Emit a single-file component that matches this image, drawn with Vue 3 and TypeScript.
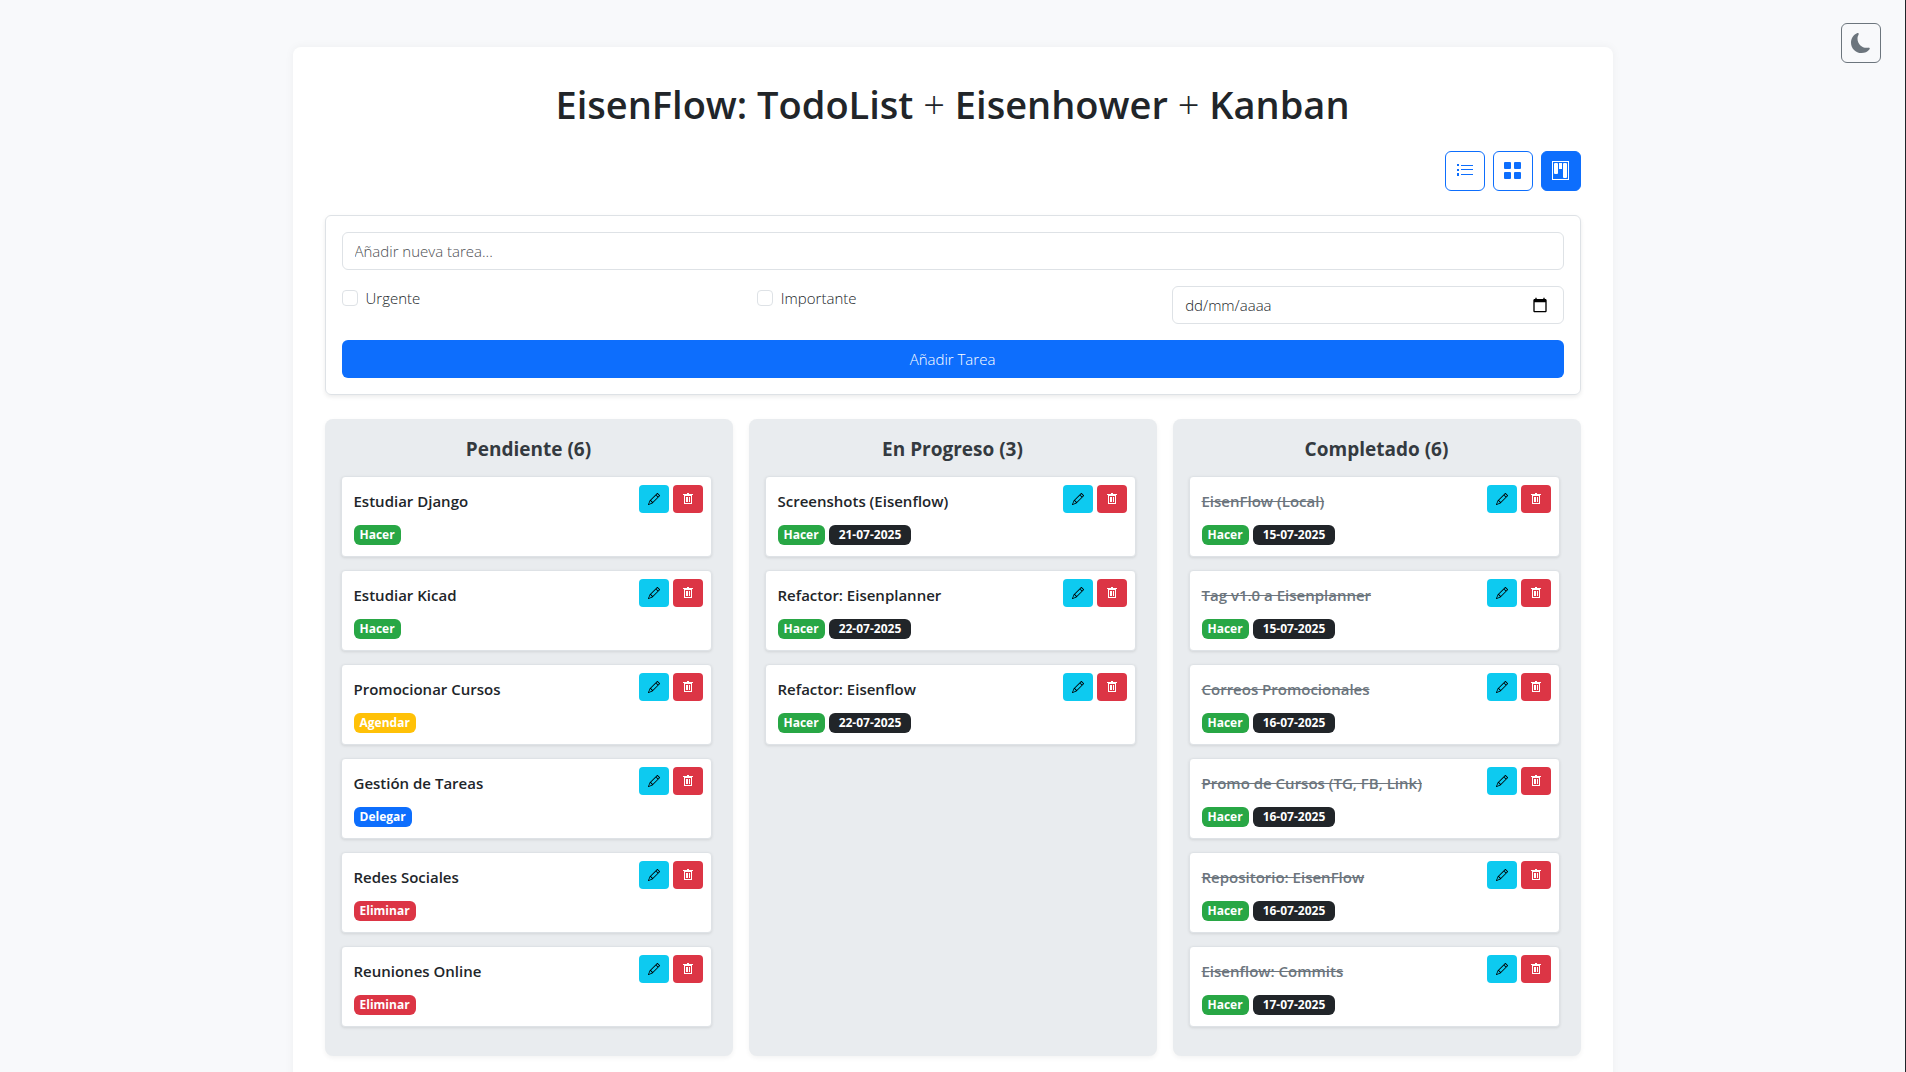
<script setup lang="ts">
import { ref } from 'vue'

type Quadrant = 'Hacer' | 'Agendar' | 'Delegar' | 'Eliminar'

interface Task {
  title: string
  quadrant: Quadrant
  due?: string
}

interface Column {
  name: string
  done: boolean
  tasks: Task[]
}

const newTask = ref('')
const dueDate = ref('')
const urgent = ref(false)
const important = ref(false)

const columns = ref<Column[]>([
  {
    name: 'Pendiente',
    done: false,
    tasks: [
      { title: 'Estudiar Django', quadrant: 'Hacer' },
      { title: 'Estudiar Kicad', quadrant: 'Hacer' },
      { title: 'Promocionar Cursos', quadrant: 'Agendar' },
      { title: 'Gestión de Tareas', quadrant: 'Delegar' },
      { title: 'Redes Sociales', quadrant: 'Eliminar' },
      { title: 'Reuniones Online', quadrant: 'Eliminar' },
    ],
  },
  {
    name: 'En Progreso',
    done: false,
    tasks: [
      { title: 'Screenshots (Eisenflow)', quadrant: 'Hacer', due: '21-07-2025' },
      { title: 'Refactor: Eisenplanner', quadrant: 'Hacer', due: '22-07-2025' },
      { title: 'Refactor: Eisenflow', quadrant: 'Hacer', due: '22-07-2025' },
    ],
  },
  {
    name: 'Completado',
    done: true,
    tasks: [
      { title: 'EisenFlow (Local)', quadrant: 'Hacer', due: '15-07-2025' },
      { title: 'Tag v1.0 a Eisenplanner', quadrant: 'Hacer', due: '15-07-2025' },
      { title: 'Correos Promocionales', quadrant: 'Hacer', due: '16-07-2025' },
      { title: 'Promo de Cursos (TG, FB, Link)', quadrant: 'Hacer', due: '16-07-2025' },
      { title: 'Repositorio: EisenFlow', quadrant: 'Hacer', due: '16-07-2025' },
      { title: 'Eisenflow: Commits', quadrant: 'Hacer', due: '17-07-2025' },
    ],
  },
])

function addTask() {
  const title = newTask.value.trim()
  if (!title) return
  const quadrant: Quadrant = urgent.value
    ? important.value ? 'Hacer' : 'Delegar'
    : important.value ? 'Agendar' : 'Eliminar'
  columns.value[0].tasks.push({ title, quadrant, due: dueDate.value || undefined })
  newTask.value = ''
}

function removeTask(column: Column, index: number) {
  column.tasks.splice(index, 1)
}
</script>

<template>
  <div class="page">
    <button class="icon-btn theme-btn" type="button" aria-label="Cambiar tema">
      <svg width="20" height="20" viewBox="0 0 16 16" fill="currentColor" aria-hidden="true">
        <path d="M6 .278a.77.77 0 0 1 .08.858 7.2 7.2 0 0 0-.878 3.46c0 4.021 3.278 7.277 7.318 7.277q.792-.001 1.533-.16a.79.79 0 0 1 .81.316.73.73 0 0 1-.031.893A8.35 8.35 0 0 1 8.344 16C3.734 16 0 12.286 0 7.71 0 4.266 2.114 1.312 5.124.06A.75.75 0 0 1 6 .278" />
      </svg>
    </button>

    <main class="container">
      <h1>EisenFlow: TodoList <span class="plus">+</span> Eisenhower <span class="plus">+</span> Kanban</h1>

      <nav class="views" aria-label="Vistas">
        <button class="icon-btn" type="button" aria-label="Lista">
          <svg width="16" height="14" viewBox="0 0 16 14" fill="currentColor" aria-hidden="true">
            <path d="M0 0h2v2H0zM0 5h2v2H0zM0 9h2v3H0zM4 1h12v1H4zM4 5h12v1H4zM4 10h12v1H4z" />
          </svg>
        </button>
        <button class="icon-btn" type="button" aria-label="Matriz">
          <svg width="18" height="18" viewBox="0 0 18 18" fill="currentColor" aria-hidden="true">
            <rect width="7" height="7" rx="1" />
            <rect x="10" width="7" height="7" rx="1" />
            <rect y="10" width="7" height="7" rx="1" />
            <rect x="10" y="10" width="7" height="7" rx="1" />
          </svg>
        </button>
        <button class="icon-btn active" type="button" aria-label="Kanban">
          <svg width="18" height="20" viewBox="0 0 18 20" fill="currentColor" aria-hidden="true">
            <rect x="0.5" y="0.5" width="16" height="18" fill="none" stroke="currentColor" />
            <rect x="2" y="2" width="4" height="11" rx="1" />
            <rect x="7" y="2" width="3" height="6" />
            <rect x="11" y="2" width="4" height="15" rx="1" />
          </svg>
        </button>
      </nav>

      <form class="task-form" @submit.prevent="addTask">
        <input v-model="newTask" class="field" type="text" placeholder="Añadir nueva tarea..." aria-label="Nueva tarea" />
        <div class="options">
          <label class="check"><input v-model="urgent" type="checkbox" /><span>Urgente</span></label>
          <label class="check"><input v-model="important" type="checkbox" /><span>Importante</span></label>
          <div class="date">
            <input v-model="dueDate" class="field" type="text" placeholder="dd/mm/aaaa" aria-label="Fecha límite" />
            <svg width="16" height="16" viewBox="0 0 24 24" aria-hidden="true">
              <path d="M20 3h-1V1h-2v2H7V1H5v2H4c-1.1 0-2 .9-2 2v16c0 1.1.9 2 2 2h16c1.1 0 2-.9 2-2V5c0-1.1-.9-2-2-2zm0 18H4V8h16v13z" />
            </svg>
          </div>
        </div>
        <button class="submit" type="submit">Añadir Tarea</button>
      </form>

      <div class="board">
        <section v-for="column in columns" :key="column.name" class="column">
          <h2>{{ column.name }} ({{ column.tasks.length }})</h2>
          <ul class="tasks" :class="{ done: column.done }">
            <li v-for="(task, i) in column.tasks" :key="task.title" class="card">
              <div class="card-body">
                <span class="title">{{ task.title }}</span>
                <div class="badges">
                  <span class="badge" :class="task.quadrant.toLowerCase()">{{ task.quadrant }}</span>
                  <span v-if="task.due" class="badge due">{{ task.due }}</span>
                </div>
              </div>
              <div class="actions">
                <button class="small-btn edit" type="button" aria-label="Editar">
                  <svg width="12" height="12" viewBox="0 0 16 16" fill="currentColor" aria-hidden="true">
                    <path d="M12.146.146a.5.5 0 0 1 .708 0l3 3a.5.5 0 0 1 0 .708l-10 10a.5.5 0 0 1-.168.11l-5 2a.5.5 0 0 1-.65-.65l2-5a.5.5 0 0 1 .11-.168zM11.207 2.5 13.5 4.793 14.793 3.5 12.5 1.207zm1.586 3L10.5 3.207 4 9.707V10h.5a.5.5 0 0 1 .5.5v.5h.5a.5.5 0 0 1 .5.5v.5h.293zm-9.761 5.175-.106.106-1.528 3.821 3.821-1.528.106-.106A.5.5 0 0 1 5 12.5V12h-.5a.5.5 0 0 1-.5-.5V11h-.5a.5.5 0 0 1-.468-.325" />
                  </svg>
                </button>
                <button class="small-btn delete" type="button" aria-label="Eliminar" @click="removeTask(column, i)">
                  <svg width="10" height="12" viewBox="0 0 10 12" fill="currentColor" aria-hidden="true">
                    <path fill-rule="evenodd" d="M4 0h2v1h4v1H9v9H1V2H0V1h4zM2 3v7h6V3z" />
                    <path d="M3 4h1v5H3zM4 4h1v5H4zM6 4h1v5H6z" />
                  </svg>
                </button>
              </div>
            </li>
          </ul>
        </section>
      </div>
    </main>
  </div>
</template>

<style>
body {
  margin: 0;
  background: #f8f9fb;
}
</style>

<style scoped>
*,
*::before,
*::after {
  box-sizing: border-box;
}

.page {
  min-height: 100vh;
  padding: 47px 16px 48px;
  border-right: 1px solid #212529;
  color: #212529;
  font-family: "Open Sans", "Noto Sans", sans-serif;
  font-size: 15px;
  font-weight: 300;
  line-height: 24px;
}

button,
input {
  font: inherit;
}

button {
  cursor: pointer;
}

.container {
  max-width: 1320px;
  margin: 0 auto;
  padding: 32px;
  border-radius: 8px;
  background: #fff;
  box-shadow: 0 0 10px rgba(0, 0, 0, 0.05);
}

h1 {
  margin: 0 0 22px;
  font-size: 38px;
  font-weight: 600;
  line-height: 50px;
  text-align: center;
}

.plus {
  font-weight: 300;
}

.icon-btn {
  display: flex;
  align-items: center;
  justify-content: center;
  width: 40px;
  height: 40px;
  padding: 0;
  border: 1px solid #0d6efd;
  border-radius: 6px;
  background: transparent;
  color: #0d6efd;
}

.icon-btn.active {
  background: #0d6efd;
  color: #fff;
}

.theme-btn {
  position: fixed;
  top: 23px;
  right: 25px;
  border-color: #6c757d;
  color: #6c757d;
}

.views {
  display: flex;
  justify-content: flex-end;
  gap: 8px;
  margin-bottom: 24px;
}

.task-form {
  display: flex;
  flex-direction: column;
  gap: 16px;
  margin-bottom: 24px;
  padding: 16px;
  border: 1px solid #dee2e6;
  border-radius: 6px;
  box-shadow: 0 2px 4px rgba(0, 0, 0, 0.08);
}

.field {
  width: 100%;
  height: 38px;
  padding: 6px 12px;
  border: 1px solid #dee2e6;
  border-radius: 6px;
  background: #fff;
  color: #212529;
}

.field::placeholder {
  color: #4b4e52;
  opacity: 1;
}

.options {
  display: grid;
  grid-template-columns: repeat(3, 1fr);
  gap: 24px;
}

.check {
  display: flex;
  align-items: flex-start;
  gap: 8px;
}

.check input {
  appearance: none;
  width: 16px;
  height: 16px;
  margin: 4px 0 0;
  border: 1px solid #dee2e6;
  border-radius: 4px;
  background: #fff;
}

.check input:checked {
  border-color: #0d6efd;
  background: #0d6efd;
}

.date {
  position: relative;
}

.date .field::placeholder {
  color: #212529;
}

.date svg {
  position: absolute;
  top: 11px;
  right: 16px;
}

.submit {
  height: 38px;
  padding: 0;
  border: 0;
  border-radius: 6px;
  background: #0d6efd;
  color: #fff;
}

.board {
  display: grid;
  grid-template-columns: repeat(3, 1fr);
  gap: 16px;
}

.column {
  padding: 16px;
  border-radius: 8px;
  background: #e9ecef;
  box-shadow: 0 2px 5px rgba(0, 0, 0, 0.05);
}

h2 {
  margin: 0 0 13px;
  color: #343a40;
  font-size: 19px;
  font-weight: 700;
  line-height: 28px;
  text-align: center;
}

.tasks {
  margin: 0;
  padding: 0 5px 0 0;
  list-style: none;
}

.card {
  display: flex;
  justify-content: space-between;
  margin-bottom: 13px;
  border: 1px solid #dee2e6;
  border-radius: 4px;
  background: #fff;
  box-shadow: 0 1px 3px rgba(0, 0, 0, 0.1);
}

.card-body {
  padding: 12px 12px 11px;
}

.title {
  display: block;
  margin-bottom: 12px;
  font-weight: 600;
}

.done .title {
  color: #6c757d;
  text-decoration: line-through;
}

.badges {
  display: flex;
  gap: 4px;
}

.badge {
  padding: 0 6px;
  border-radius: 6px;
  color: #fff;
  font-size: 12px;
  font-weight: 700;
  line-height: 20px;
}

.hacer {
  background: #28a745;
}

.agendar {
  background: #ffc107;
}

.delegar {
  background: #0d6efd;
}

.eliminar {
  background: #dc3545;
}

.due {
  padding: 0 10px;
  background: #212529;
}

.actions {
  display: flex;
  align-items: flex-start;
  gap: 4px;
  padding: 8px 8px 0 0;
}

.small-btn {
  display: flex;
  align-items: center;
  justify-content: center;
  width: 30px;
  height: 28px;
  padding: 0;
  border: 0;
  border-radius: 4px;
}

.edit {
  background: #0dcaf0;
  color: #000;
}

.delete {
  background: #dc3545;
  color: #fff;
}
</style>
